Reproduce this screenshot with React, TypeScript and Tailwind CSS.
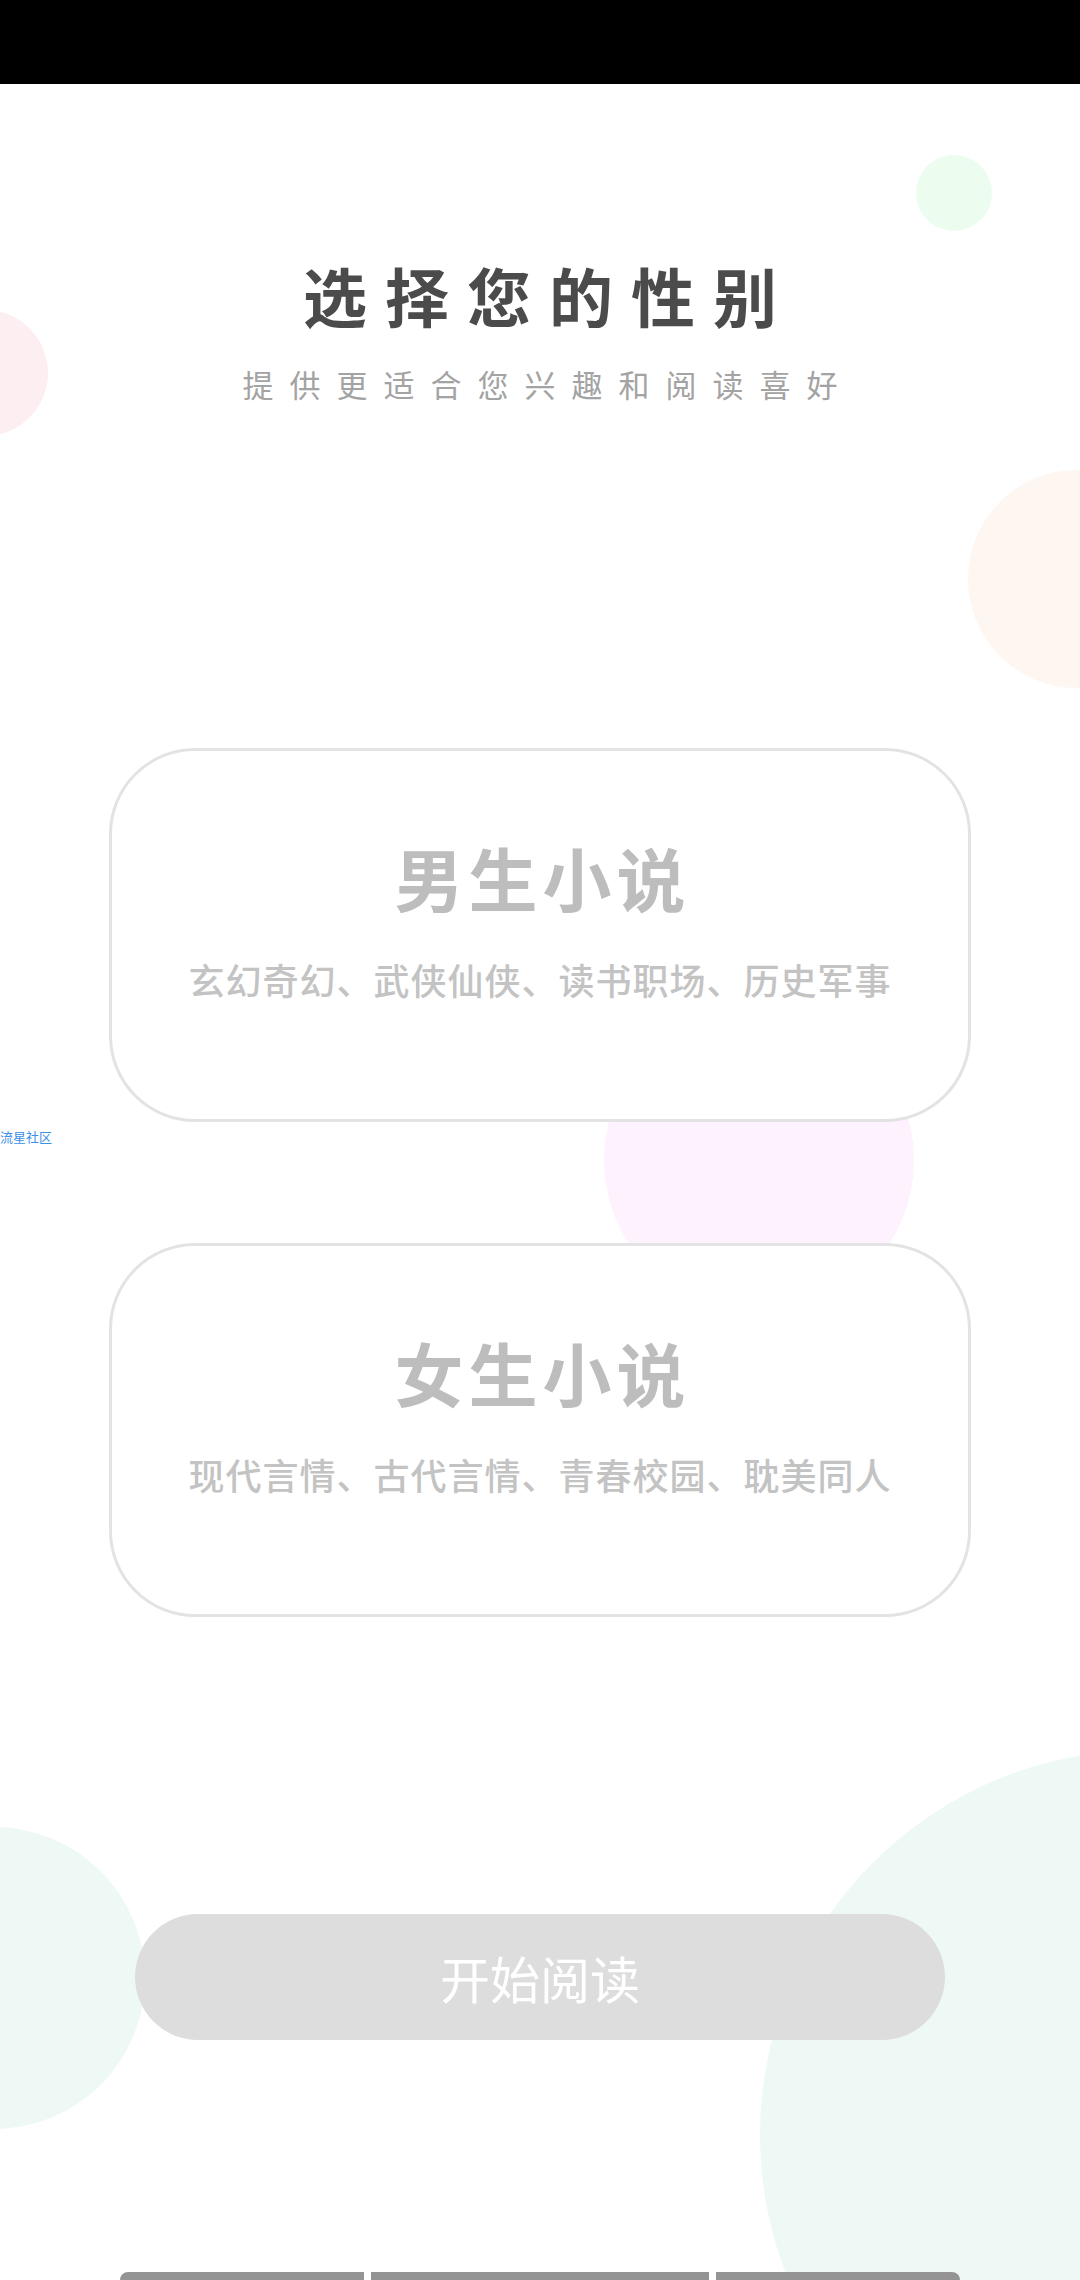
import React from 'react';

const FONT = { fontFamily: '"Noto Sans CJK SC", "Noto Sans", sans-serif' };

type Genre = { title: string; tags: string };

const GENRES: Genre[] = [
  { title: '男生小说', tags: '玄幻奇幻、武侠仙侠、读书职场、历史军事' },
  { title: '女生小说', tags: '现代言情、古代言情、青春校园、耽美同人' },
];

function GenreCard({ genre }: { genre: Genre }) {
  return (
    <div className="mx-auto flex h-[374px] w-[862px] flex-col items-center rounded-[86px] border-[3px] border-[#e3e3e3] bg-white pt-[92px]">
      <div className="text-[69px] leading-none font-semibold tracking-[5px] pl-[5px] text-[#bdbdbd]">{genre.title}</div>
      <div className="mt-[49px] text-[36px] leading-none font-medium tracking-[1px] text-[#c3c3c3]">{genre.tags}</div>
    </div>
  );
}

export default function App() {
  return (
    <div className="relative h-[2280px] w-[1080px] overflow-hidden bg-white" style={FONT}>
      {/* soft background bubbles */}
      <div className="absolute left-[916px] top-[155px] h-[76px] w-[76px] rounded-full bg-[#ecfcee]" />
      <div className="absolute left-[-78px] top-[310px] h-[126px] w-[126px] rounded-full bg-[#fdeef1]" />
      <div className="absolute left-[968px] top-[470px] h-[218px] w-[218px] rounded-full bg-[#fdf6f1]" />
      <div className="absolute left-[604px] top-[1005px] h-[310px] w-[310px] rounded-full bg-[#fdf2fd]" />
      <div className="absolute left-[-157px] top-[1827px] h-[302px] w-[302px] rounded-full bg-[#eef9f5]" />
      <div className="absolute left-[760px] top-[1750px] h-[770px] w-[770px] rounded-full bg-[#eef9f5]" />

      {/* watermark */}
      <div className="absolute left-0 top-[1130px] z-10 text-[13px] leading-none text-[#3b90e6]">流星社区</div>

      <div className="relative z-10 flex flex-col">
        <div className="h-[84px] bg-black" />

        <div className="mt-[178px] text-center text-[64px] leading-none font-bold tracking-[18px] pl-[18px] text-[#4b4b4b]">
          选择您的性别
        </div>
        <div className="mt-[42px] text-center text-[31px] leading-none tracking-[16px] pl-[16px] text-[#a3a3a3]">
          提供更适合您兴趣和阅读喜好
        </div>

        <div className="mt-[349px] flex flex-col gap-[121px]">
          {GENRES.map((g) => (
            <GenreCard key={g.title} genre={g} />
          ))}
        </div>

        <button className="mx-auto mt-[297px] flex h-[126px] w-[810px] items-center justify-center rounded-full bg-[#dddddd] text-[50px] leading-none text-white">
          开始阅读
        </button>

        <div className="mt-[232px] flex justify-center gap-[7px]">
          <div className="h-[16px] w-[244px] rounded-l-full bg-[#949494]" />
          <div className="h-[16px] w-[338px] bg-[#949494]" />
          <div className="h-[16px] w-[244px] rounded-r-full bg-[#949494]" />
        </div>
      </div>
    </div>
  );
}
